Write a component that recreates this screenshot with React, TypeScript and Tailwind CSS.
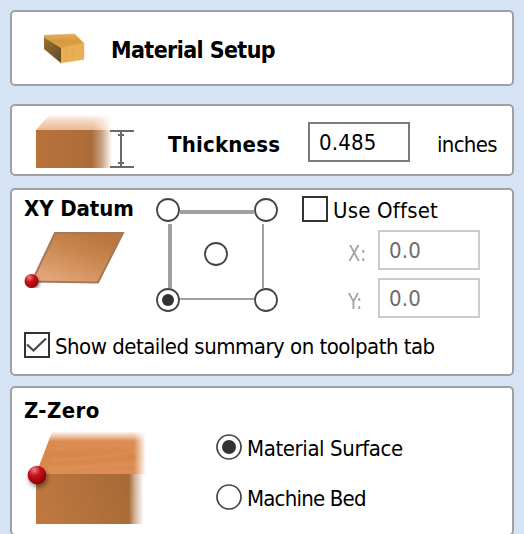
import { useState } from "react";
import type { ReactNode } from "react";
import clsx from "clsx";

const corners = [
  { id: "top-left", x: 12, y: 12 },
  { id: "top-right", x: 110, y: 12 },
  { id: "centre", x: 60, y: 56 },
  { id: "bottom-left", x: 12, y: 102 },
  { id: "bottom-right", x: 110, y: 102 },
];

function Panel({ className, children }: { className?: string; children: ReactNode }) {
  return (
    <section className={clsx("shrink-0 rounded-[5px] border-2 border-[#a0a0a0] bg-white", className)}>
      {children}
    </section>
  );
}

function Field({ value, disabled }: { value: string; disabled?: boolean }) {
  return (
    <div
      className={clsx(
        "flex h-10 w-[102px] items-center border-2 bg-white pt-0.5 pl-[9px] text-[22px] leading-none tracking-[0.2px]",
        disabled ? "border-[#cccccc] text-[#6d6d6d]" : "border-[#7a7a7a] text-black"
      )}
    >
      {value}
    </div>
  );
}

function CheckBox({ checked }: { checked: boolean }) {
  return (
    <svg width="26" height="26" viewBox="0 0 26 26" className="shrink-0">
      <rect x="1" y="1" width="24" height="24" fill="#fff" stroke="#333" strokeWidth="2" />
      {checked && <path d="M3 12.5 L9.500 18.500 L22 6.500" fill="none" stroke="#4a4a4a" strokeWidth="2.2" />}
    </svg>
  );
}

function Radio({ checked }: { checked: boolean }) {
  return (
    <svg width="26" height="26" viewBox="0 0 26 26" className="shrink-0">
      <circle cx="13" cy="13" r="12" fill="#fff" stroke="#444" strokeWidth="1.7" />
      {checked && <circle cx="13" cy="13" r="7" fill="#333" />}
    </svg>
  );
}

function BlockIcon() {
  return (
    <svg width="42" height="32" viewBox="0 0 42 32">
      <defs>
        <linearGradient id="blockTop" x1="0" y1="0" x2="0" y2="1">
          <stop offset="0" stopColor="#e3ae5c" />
          <stop offset="0.5" stopColor="#d69a3c" />
          <stop offset="1" stopColor="#e0a548" />
        </linearGradient>
        <linearGradient id="blockSide" x1="0" y1="0" x2="1" y2="1">
          <stop offset="0" stopColor="#9c6f30" />
          <stop offset="1" stopColor="#5e4a2c" />
        </linearGradient>
      </defs>
      <path d="M0 3 L30 1 L41 11 L40.5 28 L16 32 L0 17 Z" fill="#f0d3a0" opacity="0.5" />
      <path d="M0 3 L31 2 L40 11.5 L17 16.5 L0 6 Z" fill="url(#blockTop)" />
      <path d="M0 5.500 L17 16 L17 31 L0 17 Z" fill="url(#blockSide)" />
      <path d="M17 16 L40 11 L40 27.5 L17 31 Z" fill="#e8b055" />
      <path d="M22 16 V29 M29 15 V28" stroke="#dfa347" strokeWidth="1.5" opacity="0.6" />
    </svg>
  );
}

function ThicknessIcon() {
  return (
    <svg width="98" height="56" viewBox="0 0 98 56">
      <defs>
        <linearGradient id="thickTop" x1="0" y1="0" x2="0" y2="1">
          <stop offset="0" stopColor="#edba98" stopOpacity="0" />
          <stop offset="0.45" stopColor="#edba98" stopOpacity="0.6" />
          <stop offset="1" stopColor="#ecb894" />
        </linearGradient>
        <linearGradient id="thickFront" x1="0" y1="0" x2="1" y2="0">
          <stop offset="0" stopColor="#b9733d" />
          <stop offset="0.7" stopColor="#ac6c38" />
          <stop offset="1" stopColor="#a97042" />
        </linearGradient>
        <linearGradient id="thickFade" x1="0" y1="0" x2="80" y2="0" gradientUnits="userSpaceOnUse">
          <stop offset="0.7" stopColor="#fff" />
          <stop offset="0.82" stopColor="#fff" stopOpacity="0.65" />
          <stop offset="0.95" stopColor="#fff" stopOpacity="0" />
        </linearGradient>
        <mask id="thickMask">
          <rect width="98" height="56" fill="url(#thickFade)" />
        </mask>
      </defs>
      <g mask="url(#thickMask)">
        <path d="M0 18 L14 2 H82 V18 Z" fill="url(#thickTop)" />
        <rect y="18" width="76" height="38" fill="url(#thickFront)" />
      </g>
      <path d="M74 19 H98 M74 55 H98 M85 19 V55 M82 23 H88 M82 51 H88" stroke="#696969" strokeWidth="2" />
    </svg>
  );
}

function SheetIcon() {
  return (
    <svg width="104" height="60" viewBox="0 0 104 60">
      <defs>
        <linearGradient id="sheet" x1="0.1" y1="1" x2="0.75" y2="0.1">
          <stop offset="0" stopColor="#e8ab80" />
          <stop offset="0.6" stopColor="#cb8953" />
          <stop offset="1" stopColor="#bb773f" />
        </linearGradient>
        <radialGradient id="sheetPin" cx="0.35" cy="0.25" r="0.8">
          <stop offset="0" stopColor="#ed8585" />
          <stop offset="0.4" stopColor="#c9121c" />
          <stop offset="1" stopColor="#8e0000" />
        </radialGradient>
        <filter id="sheetShadow" x="-50%" y="-50%" width="200%" height="200%">
          <feGaussianBlur stdDeviation="1.5" />
        </filter>
      </defs>
      <path d="M31 5 H99 L74 54.5 L8 53.5 Z" fill="url(#sheet)" stroke="#a3795b" strokeWidth="2" />
      <circle cx="9.500" cy="55" r="6.500" fill="#000" opacity="0.4" filter="url(#sheetShadow)" />
      <circle cx="7.500" cy="53" r="7" fill="url(#sheetPin)" />
    </svg>
  );
}

function SurfaceIcon() {
  return (
    <svg width="124" height="96" viewBox="0 0 124 96">
      <defs>
        <linearGradient id="surfTop" x1="0" y1="0" x2="0" y2="1">
          <stop offset="0" stopColor="#dc9158" stopOpacity="0.1" />
          <stop offset="0.22" stopColor="#dc8c50" />
          <stop offset="0.55" stopColor="#d88548" />
          <stop offset="1" stopColor="#dc8e56" />
        </linearGradient>
        <linearGradient id="surfFront" x1="0" y1="0.6" x2="1" y2="0.4">
          <stop offset="0" stopColor="#c07840" />
          <stop offset="1" stopColor="#a36835" />
        </linearGradient>
        <linearGradient id="surfFadeTop" x1="0" y1="0" x2="122" y2="0" gradientUnits="userSpaceOnUse">
          <stop offset="0.9" stopColor="#fff" />
          <stop offset="1" stopColor="#fff" stopOpacity="0" />
        </linearGradient>
        <linearGradient id="surfFadeFront" x1="0" y1="0" x2="122" y2="0" gradientUnits="userSpaceOnUse">
          <stop offset="0.86" stopColor="#fff" />
          <stop offset="0.91" stopColor="#fff" stopOpacity="0.5" />
          <stop offset="0.98" stopColor="#fff" stopOpacity="0" />
        </linearGradient>
        <mask id="surfMaskTop">
          <rect width="122" height="96" fill="url(#surfFadeTop)" />
        </mask>
        <mask id="surfMaskFront">
          <rect width="122" height="96" fill="url(#surfFadeFront)" />
        </mask>
        <radialGradient id="surfPin" cx="0.35" cy="0.22" r="0.8">
          <stop offset="0" stopColor="#ec8585" />
          <stop offset="0.4" stopColor="#c9121c" />
          <stop offset="1" stopColor="#860000" />
        </radialGradient>
        <filter id="surfShadow" x="-50%" y="-50%" width="200%" height="200%">
          <feGaussianBlur stdDeviation="2.5" />
        </filter>
        <filter id="surfGrain">
          <feGaussianBlur stdDeviation="1" />
        </filter>
      </defs>
      <g mask="url(#surfMaskTop)">
        <path d="M12 44 L28 2 H122 V44 Z" fill="url(#surfTop)" />
        <path
          d="M30 19 Q60 14 110 16 M26 29 Q70 30 116 21 M22 39 Q60 37 116 33"
          fill="none"
          stroke="#e39a66"
          strokeWidth="2.5"
          opacity="0.4"
          filter="url(#surfGrain)"
        />
      </g>
      <g mask="url(#surfMaskFront)">
        <rect x="12" y="44" width="110" height="50" fill="url(#surfFront)" />
      </g>
      <circle cx="14" cy="48" r="9" fill="#000" opacity="0.5" filter="url(#surfShadow)" />
      <circle cx="13" cy="45" r="9.300" fill="url(#surfPin)" />
    </svg>
  );
}

function DatumPicker({ value, onChange }: { value: string; onChange: (id: string) => void }) {
  return (
    <svg width="122" height="114" viewBox="0 0 122 114">
      <path d="M24 14 H98 M14 26 V90" stroke="#a0a0a0" strokeWidth="4" />
      <path d="M107 26 V90 M24 101 H98" stroke="#a0a0a0" strokeWidth="2" />
      {corners.map((c) => (
        <g key={c.id} onClick={() => onChange(c.id)}>
          <circle cx={c.x} cy={c.y} r="11" fill="#fff" stroke="#444" strokeWidth="1.8" />
          {value === c.id && <circle cx={c.x} cy={c.y} r="6" fill="#333" />}
        </g>
      ))}
    </svg>
  );
}

export default function App() {
  const [datum, setDatum] = useState("bottom-left");
  const [useOffset, setUseOffset] = useState(false);
  const [summary, setSummary] = useState(true);
  const [zZero, setZZero] = useState("surface");

  return (
    <div className="flex h-[534px] w-[524px] flex-col overflow-hidden bg-[#d5e3f4] px-2.5 pt-2.5 font-['DejaVu_Sans_Condensed','DejaVu_Sans',sans-serif] text-[22px] leading-7 whitespace-nowrap text-black [font-stretch:condensed]">
      {/* Header */}
      <Panel className="mb-[18px] flex h-[76px] items-center pl-8">
        <BlockIcon />
        <h1 className="ml-[25px] pt-1 text-[23px] font-bold tracking-[-0.6px]">Material Setup</h1>
      </Panel>

      {/* Thickness */}
      <Panel className="mb-3 flex h-[72px] items-center pl-6">
        <ThicknessIcon />
        <span className="ml-[34px] w-[140px] pt-[9px] font-bold tracking-[0.2px]">Thickness</span>
        <div className="pt-1">
          <Field value="0.485" />
        </div>
        <span className="ml-[27px] pt-[9px] tracking-[-0.7px]">inches</span>
      </Panel>

      {/* XY datum */}
      <Panel className="mb-2.5 h-[188px] pl-3">
        <div className="flex h-[142px]">
          <div className="flex w-[132px] flex-col pt-[5px]">
            <h2 className="font-bold tracking-[-0.1px]">XY Datum</h2>
            <div className="mt-[5px]">
              <SheetIcon />
            </div>
          </div>
          <div className="pt-2">
            <DatumPicker value={datum} onChange={setDatum} />
          </div>
          <div className="ml-6 pt-1.5">
            <label className="flex h-[26px] items-center" onClick={() => setUseOffset(!useOffset)}>
              <CheckBox checked={useOffset} />
              <span className="ml-[5px] pt-[3px] tracking-[0.2px]">Use Offset</span>
            </label>
            <div className="mt-2 ml-[46px] flex flex-col gap-2">
              {["X:", "Y:"].map((axis) => (
                <div key={axis} className="flex items-center">
                  <span className="w-[30px] origin-left scale-x-90 pt-2 text-[#a0a0a0]">{axis}</span>
                  <Field value="0.0" disabled={!useOffset} />
                </div>
              ))}
            </div>
          </div>
        </div>
        <label className="flex h-[26px] items-center" onClick={() => setSummary(!summary)}>
          <CheckBox checked={summary} />
          <span className="ml-[5px] pt-1 tracking-[-0.5px]">Show detailed summary on toolpath tab</span>
        </label>
      </Panel>

      {/* Z zero */}
      <Panel className="flex h-[150px] pl-3">
        <div className="w-[192px] pt-[9px]">
          <h2 className="font-bold tracking-[0.4px]">Z-Zero</h2>
          <div className="mt-[5px]">
            <SurfaceIcon />
          </div>
        </div>
        <div className="flex flex-col gap-6 pt-[46px]">
          <label className="flex h-[26px] items-center" onClick={() => setZZero("surface")}>
            <Radio checked={zZero === "surface"} />
            <span className="ml-[5px] pt-[3px] tracking-[-0.4px]">Material Surface</span>
          </label>
          <label className="flex h-[26px] items-center" onClick={() => setZZero("bed")}>
            <Radio checked={zZero === "bed"} />
            <span className="ml-[5px] pt-[3px] tracking-[-0.8px]">Machine Bed</span>
          </label>
        </div>
      </Panel>
    </div>
  );
}
